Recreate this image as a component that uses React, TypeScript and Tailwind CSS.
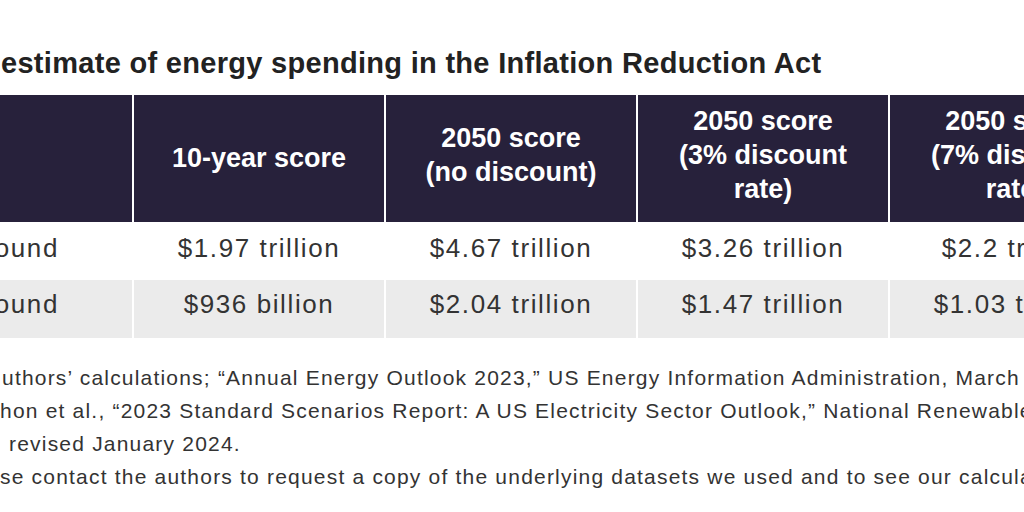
import React from "react";

const font = { fontFamily: '"Liberation Sans", Arial, sans-serif' };

type Row = { label: string; vals: string[] };

const rows: Row[] = [
  { label: "Upper bound", vals: ["$1.97 trillion", "$4.67 trillion", "$3.26 trillion", "$2.2 trillion"] },
  { label: "Lower bound", vals: ["$936 billion", "$2.04 trillion", "$1.47 trillion", "$1.03 trillion"] },
];

function HeadCell({ children, multi }: { children?: React.ReactNode; multi?: boolean }) {
  return (
    <div
      className={`flex h-[127px] items-center justify-center bg-[#27213b] text-center text-[27px] font-bold leading-[34px] text-white ${
        multi ? "pb-[8px]" : "pb-[2px]"
      }`}
    >
      <div>{children}</div>
    </div>
  );
}

export default function App() {
  return (
    <div className="h-[512px] w-[1024px] overflow-hidden bg-white text-[#333333]" style={font}>
      <div className="ml-[-118px] w-[1258px]">
        <h1 className="whitespace-nowrap pl-[119px] pt-[46px] text-[29px] font-bold leading-[34px] tracking-[0.3px] text-[#222222]">
          estimate of energy spending in the Inflation Reduction Act
        </h1>
        <div className="mt-[15px] grid grid-cols-[repeat(5,250px)] grid-rows-[127px_54px_58px] gap-[2px]">
          <HeadCell />
          <HeadCell>10-year score</HeadCell>
          <HeadCell multi>
            2050 score
            <br />
            (no discount)
          </HeadCell>
          <HeadCell multi>
            2050 score
            <br />
            (3% discount
            <br />
            rate)
          </HeadCell>
          <HeadCell multi>
            2050 score
            <br />
            (7% discount
            <br />
            rate)
          </HeadCell>
          {rows.map((r, i) => (
            <React.Fragment key={r.label}>
              <div
                className={`flex items-start justify-end pr-[73px] pt-[7px] text-[26px] leading-[34px] tracking-[1.6px] ${
                  i === 1 ? "bg-[#ebebeb]" : "bg-white"
                }`}
              >
                {r.label}
              </div>
              {r.vals.map((v) => (
                <div
                  key={v}
                  className={`flex items-start justify-center pt-[7px] text-[26px] leading-[34px] tracking-[1.6px] ${
                    i === 1 ? "bg-[#ebebeb]" : "bg-white"
                  }`}
                >
                  {v}
                </div>
              ))}
            </React.Fragment>
          ))}
        </div>
      </div>
      <div className="mt-[23px] text-[21px] leading-[33px] tracking-[1.2px] text-[#333333]">
        <div className="whitespace-nowrap pl-[2px]">
          uthors’ calculations; “Annual Energy Outlook 2023,” US Energy Information Administration, March 2023;
        </div>
        <div className="whitespace-nowrap">
          hon et al., “2023 Standard Scenarios Report: A US Electricity Sector Outlook,” National Renewable Energy
        </div>
        <div className="whitespace-nowrap pl-[9px]">revised January 2024.</div>
        <div className="whitespace-nowrap">
          se contact the authors to request a copy of the underlying datasets we used and to see our calculations.
        </div>
      </div>
    </div>
  );
}
